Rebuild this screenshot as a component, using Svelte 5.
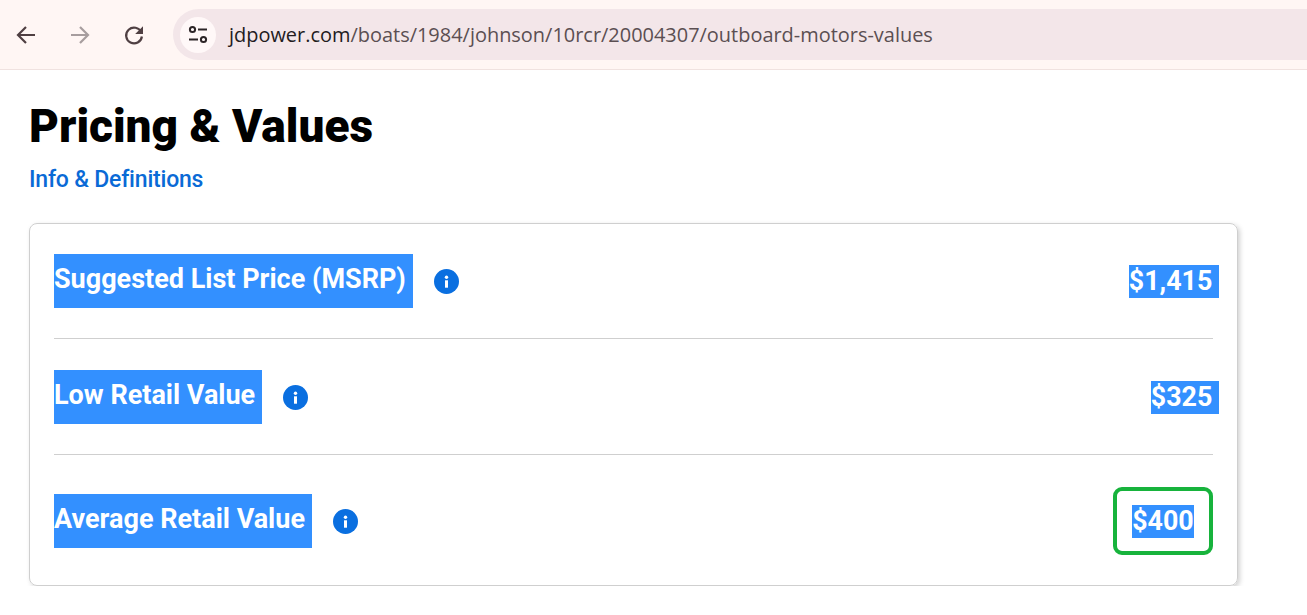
<script>
  const rows = [
    { label: 'Suggested List Price (MSRP)', value: '$1,415' },
    { label: 'Low Retail Value', value: '$325' },
    { label: 'Average Retail Value', value: '$400', best: true }
  ];
</script>

<div class="toolbar">
  <div class="nav">
    <svg viewBox="0 0 24 24" class="ic"><path d="M21 12H5M12 4l-8 8 8 8" fill="none" stroke="#4f3f42" stroke-width="2.2"/></svg>
    <svg viewBox="0 0 24 24" class="ic"><path d="M3 12h16M12 4l8 8-8 8" fill="none" stroke="#a79d9e" stroke-width="2.2"/></svg>
    <svg viewBox="0 0 24 24" class="ic"><path d="M19.300 9.300A7.900 7.900 0 1 0 19.900 13.500" fill="none" stroke="#4f3f42" stroke-width="2.200"/><path d="M21 3.200v7.800h-7.800z" fill="#4f3f42"/></svg>
  </div>
  <div class="pill">
    <span class="site">
      <svg viewBox="0 0 20 20" width="20" height="20"><circle cx="4.500" cy="4.500" r="2.600" fill="none" stroke="#2c2527" stroke-width="2"/><path d="M10 4.500h9M1 14.500h9" stroke="#2c2527" stroke-width="2.200" fill="none"/><circle cx="15.500" cy="14.500" r="2.600" fill="none" stroke="#2c2527" stroke-width="2"/></svg>
    </span>
    <span class="url"><span class="host">jdpower.com</span>/boats/1984/johnson/10rcr/20004307/outboard-motors-values</span>
  </div>
</div>

<main>
  <h1>Pricing &amp; Values</h1>
  <a class="link" href="#info">Info &amp; Definitions</a>

  <section class="card">
    {#each rows as row, i}
      <div class="row" class:best={row.best} class:second={i === 1}>
        <div class="left">
          <span class="label">{row.label}&nbsp;</span>
          <svg class="info" viewBox="0 0 25 25" width="25" height="25">
            <circle cx="12.500" cy="12.500" r="12.500" fill="#0a6fe0"/>
            <circle cx="12.500" cy="8.300" r="1.700" fill="#fff"/>
            <rect x="11" y="11.300" width="3" height="7.400" fill="#fff"/>
          </svg>
        </div>
        <div class="val-wrap">
          <span class="value">{row.value}{#if !row.best}&nbsp;{/if}</span>
        </div>
      </div>
    {/each}
  </section>
</main>

<style>
  :global(body) {
    margin: 0;
    background: #fff;
    font-family: Roboto, "Liberation Sans", sans-serif;
    overflow: hidden;
  }
  .toolbar {
    height: 69px;
    background: #fff6f4;
    border-bottom: 1px solid #f0e2e0;
    display: flex;
    align-items: center;
    padding-left: 14px;
  }
  .nav {
    display: flex;
    gap: 30px;
    width: 159px;
    flex: none;
  }
  .ic {
    width: 24px;
    height: 24px;
  }
  .pill {
    flex: 1;
    height: 51px;
    background: #f3e6e9;
    border-radius: 26px 0 0 26px;
    display: flex;
    align-items: center;
    padding-left: 7px;
  }
  .site {
    width: 36px;
    height: 36px;
    border-radius: 50%;
    background: #fff8f8;
    display: flex;
    align-items: center;
    justify-content: center;
    margin-right: 13px;
  }
  .url {
    font-family: "Open Sans", sans-serif;
    font-size: 19.95px;
    color: #5b4f52;
    white-space: nowrap;
  }
  .host {
    color: #231c1e;
  }
  main {
    padding: 0 29px;
  }
  h1 {
    margin: 0;
    padding-top: 27px;
    font-family: Roboto, sans-serif;
    font-weight: 900;
    font-size: 46px;
    line-height: 58px;
    color: #000;
  }
  .link {
    display: block;
    margin-top: 10px;
    font-size: 23px;
    letter-spacing: -0.2px;
    line-height: 30px;
    font-weight: 500;
    color: #0a6ad6;
    text-decoration: none;
  }
  .card {
    width: 1209px;
    height: 363px;
    box-sizing: border-box;
    margin-top: 28px;
    border: 1px solid #cfcfcf;
    border-radius: 8px;
    box-shadow: 2px 2px 5px rgba(0, 0, 0, 0.18);
    padding: 0 24px;
  }
  .row {
    display: flex;
    justify-content: space-between;
    align-items: center;
    height: 115px;
    box-sizing: border-box;
    border-bottom: 1px solid #cfcfcf;
  }
  .row.second {
    height: 116px;
    padding-top: 1px;
  }
  .row.best {
    height: 130px;
    padding-top: 2px;
    border-bottom: 0;
  }
  .left {
    display: flex;
    align-items: center;
    gap: 21.5px;
  }
  .label {
    background: #3390ff;
    color: #fff;
    font-weight: 700;
    font-size: 27px;
    line-height: 50px;
    padding-bottom: 4px;
    display: block;
  }
  .info {
    flex: none;
  }
  .val-wrap {
    display: flex;
    align-items: center;
  }
  .value {
    background: #3390ff;
    color: #fff;
    font-weight: 700;
    font-size: 26.8px;
    line-height: 33px;
    display: block;
    margin-right: -6px;
  }
  .best .val-wrap {
    box-sizing: border-box;
    width: 100px;
    height: 68px;
    border: 4px solid #17b33c;
    border-radius: 9px;
    justify-content: center;
  }
  .best .value {
    margin-right: 0;
  }
</style>
